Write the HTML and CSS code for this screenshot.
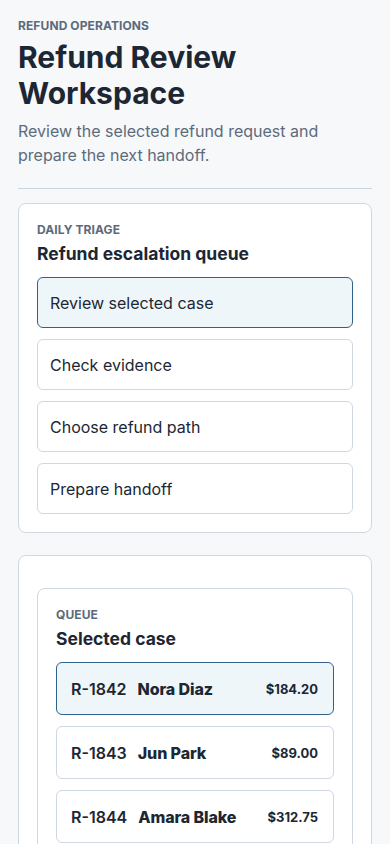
FILE: index.html
```html
<!DOCTYPE html>
<html lang="en">
<head>
    <meta charset="UTF-8">
    <meta name="viewport" content="width=device-width, initial-scale=1.0">
    <title>Refund Review Workspace</title>
    <link rel="stylesheet" href="styles.css">
</head>
<body>
    <main class="page">
        <header class="page-head">
            <p class="eyebrow">Refund Operations</p>
            <h1>Refund Review Workspace</h1>
            <p class="lead">Review the selected refund request and prepare the next handoff.</p>
        </header>

        <section class="card">
            <p class="eyebrow">Daily triage</p>
            <h2>Refund escalation queue</h2>
            <div class="steps">
                <button class="step active">Review selected case</button>
                <button class="step">Check evidence</button>
                <button class="step">Choose refund path</button>
                <button class="step">Prepare handoff</button>
            </div>
        </section>

        <section class="card card-outer">
            <div class="card inner">
                <p class="eyebrow">Queue</p>
                <h2>Selected case</h2>
                <div class="cases">
                    <div class="case active">
                        <span class="case-id">R-1842</span>
                        <span class="case-name">Nora Diaz</span>
                        <span class="case-amount">$184.20</span>
                    </div>
                    <div class="case">
                        <span class="case-id">R-1843</span>
                        <span class="case-name">Jun Park</span>
                        <span class="case-amount">$89.00</span>
                    </div>
                    <div class="case">
                        <span class="case-id">R-1844</span>
                        <span class="case-name">Amara Blake</span>
                        <span class="case-amount">$312.75</span>
                    </div>
                </div>
            </div>
        </section>
    </main>
</body>
</html>
```

FILE: styles.css
```css
* {
    box-sizing: border-box;
    margin: 0;
    padding: 0;
}
body {
    font-family: Inter, 'Noto Sans', sans-serif;
    background-color: #f6f8fa;
    color: #1c2733;
}
.page {
    padding: 18px 18px 40px;
}
.page-head {
    padding-bottom: 21px;
    margin-bottom: 14px;
    border-bottom: 1px solid #c9d5e1;
}
.eyebrow {
    font-size: 12px;
    font-weight: 700;
    text-transform: uppercase;
    color: #5c6a7a;
    line-height: 16px;
    letter-spacing: 0.1px;
}
h1 {
    font-size: 30px;
    line-height: 36px;
    font-weight: 700;
    margin-top: 5px;
}
.lead {
    font-size: 16px;
    line-height: 24px;
    color: #5d6b7b;
    margin-top: 8px;
}
.card {
    background-color: white;
    border: 1px solid #cfd8e2;
    border-radius: 8px;
    padding: 18px;
}
.card + .card {
    margin-top: 22px;
}
.card-outer {
    padding-top: 32px;
}
h2 {
    font-size: 17.5px;
    line-height: 22px;
    font-weight: 700;
    margin-top: 5px;
}
.steps, .cases {
    display: flex;
    flex-direction: column;
    gap: 11px;
    margin-top: 12px;
}
.step {
    display: block;
    width: 100%;
    height: 51px;
    padding: 0 12px;
    text-align: left;
    font-family: inherit;
    font-size: 16px;
    color: #1c2733;
    background-color: white;
    border: 1px solid #cfd8e2;
    border-radius: 6px;
}
.step.active, .case.active {
    background-color: #eef6fa;
    border-color: #2f628a;
}
.case {
    display: flex;
    align-items: center;
    gap: 11px;
    height: 53px;
    padding: 0 15px 0 14px;
    border: 1px solid #cfd8e2;
    border-radius: 6px;
    background-color: white;
}
.case-id {
    font-size: 16px;
    font-weight: 600;
}
.case-name {
    font-size: 16px;
    font-weight: 800;
    flex: 1;
    letter-spacing: -0.1px;
}
.case-amount {
    font-size: 13px;
    font-weight: 700;
}
```
